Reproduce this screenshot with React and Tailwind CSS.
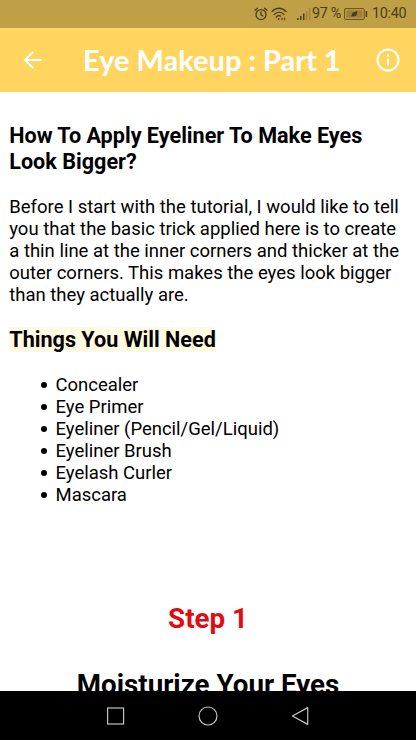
const ITEMS = [
  'Concealer',
  'Eye Primer',
  'Eyeliner (Pencil/Gel/Liquid)',
  'Eyeliner Brush',
  'Eyelash Curler',
  'Mascara'
];

function StatusBar() {
  return (
    <div className="h-7 shrink-0 bg-[#c0a047] flex items-center justify-end pr-[10px] text-[#4b3d18] font-[Roboto] text-[14.4px] leading-7 tracking-[-0.3px] whitespace-nowrap">
      <svg className="w-[14px] h-[14px] mr-[3px]" viewBox="0 0 14 14" fill="none" stroke="currentColor" strokeWidth="1.3" strokeLinecap="round">
        <circle cx="7" cy="7.6" r="5" />
        <path d="M7 5v2.8l1.9 1.2M1 3.2 3.4 1.2M13 3.2 10.6 1.2" />
      </svg>
      <svg className="w-4 h-[14px] mr-[9px]" viewBox="0 0 16 14" fill="none" stroke="currentColor" strokeWidth="1.4" strokeLinecap="round">
        <path d="M1 4.6C5 .1 11 .1 15 4.6M3.2 7.4c3-3.1 6.8-3.1 9.6 0M5.3 9.9c1.4-1.4 3-1.6 4.2-.8" />
        <circle cx="7.6" cy="12" r=".9" fill="currentColor" stroke="none" />
        <path d="M11 11v1.6M13.6 11v1.6" strokeWidth="1.2" />
      </svg>
      <svg className="w-[15px] h-[14px] mr-px" viewBox="0 0 15 14" fill="currentColor">
        <path d="M1 11h1.5v2H1zM4 9h1.5v4H4zM7 6.5h1.5V13H7z" />
        <path d="M10 4h1.3v9H10zM13 1h1.3v12H13z" opacity=".3" />
      </svg>
      <span className="w-[29px]">97 %</span>
      <svg className="w-[24px] h-3 ml-[3px] mr-[4px]" viewBox="0 0 24 12" fill="none" stroke="currentColor">
        <rect x=".6" y=".6" width="19.6" height="10.8" rx="1" strokeWidth="1" opacity=".8" />
        <rect x="2.4" y="2.4" width="16" height="7.2" fill="currentColor" stroke="none" opacity=".3" />
        <path d="M7.5 9c-.3-3.7 2-5.7 5.8-5.8.3 3.8-1.6 6-4.6 5z" fill="currentColor" stroke="none" />
        <path d="M22.4 3v6" strokeWidth="1.5" />
      </svg>
      <span className="w-[34px]">10:40</span>
    </div>
  );
}

function Header() {
  return (
    <header className="h-16 shrink-0 bg-[#ffd55f] flex items-center text-white">
      <button className="ml-[23px] w-5 h-5" aria-label="Back">
        <svg className="w-5 h-5" viewBox="0 0 20 20" fill="none" stroke="currentColor" strokeWidth="2">
          <path d="M18.6 10H2M10.2 1.7 1.9 10l8.3 8.3" />
        </svg>
      </button>
      <h1 className="ml-10 w-[260px] font-[Lato] font-bold text-[29px] leading-[36px] whitespace-nowrap">
        Eye Makeup : Part 1
      </h1>
      <button className="ml-[33px] w-6 h-6" aria-label="Info">
        <svg className="w-6 h-6" viewBox="0 0 24 24" fill="none" stroke="currentColor" strokeWidth="2">
          <circle cx="12" cy="12" r="10.5" />
          <path d="M12 10.4v7.2M12 6.4v2.2" />
        </svg>
      </button>
    </header>
  );
}

function NavBar() {
  return (
    <nav className="h-[49px] shrink-0 bg-black">
      <svg className="w-full h-[49px]" viewBox="0 0 416 49" fill="none" stroke="#c4c4c4" strokeWidth="1.2">
        <rect x="107.6" y="17" width="16" height="16" />
        <circle cx="208" cy="25" r="9" />
        <path d="M307.7 16.6v16.8L292.4 25z" strokeLinejoin="round" />
      </svg>
    </nav>
  );
}

export default function App() {
  return (
    <div className="h-[740px] w-[416px] flex flex-col overflow-hidden bg-white">
      <StatusBar />
      <Header />
      <main className="flex-1 min-h-0 overflow-hidden px-[9.25px] pt-[31px] font-[Roboto] text-[18.49px] leading-[22px] text-black">
        <h3 className="text-[21.6px] leading-[26px] font-bold">
          How To Apply Eyeliner To Make Eyes Look Bigger?
        </h3>
        <p className="mt-[21px]">
          Before I start with the tutorial, I would like to tell you that the basic trick applied
          here is to create a thin line at the inner corners and thicker at the outer corners. This
          makes the eyes look bigger than they actually are.
        </p>
        <h3 className="mt-[21px] text-[21.6px] leading-[26px] font-bold">
          <span className="bg-[#fffae1]">Things You Will Need</span>
        </h3>
        <ul className="mt-[21px] pl-[32px]">
          {ITEMS.map((item) => (
            <li
              key={item}
              className="flex items-center before:content-[''] before:w-[6px] before:h-[6px] before:mr-[8.25px] before:rounded-full before:bg-black"
            >
              {item}
            </li>
          ))}
        </ul>
        <h2 className="mt-[97px] text-center text-[27.73px] leading-[32.5px] font-bold text-[#e10b12]">
          Step 1
        </h2>
        <h2 className="mt-[33px] text-center text-[27.73px] leading-[32.5px] font-bold">
          Moisturize Your Eyes
        </h2>
      </main>
      <NavBar />
    </div>
  );
}
